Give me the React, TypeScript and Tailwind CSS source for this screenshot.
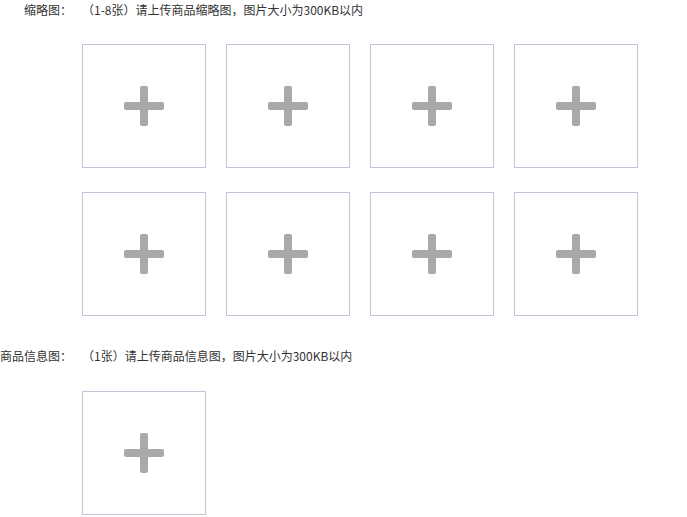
import React from "react";

function Plus() {
  return (
    <svg width="40" height="40" viewBox="0 0 40 40">
      <rect x="0" y="16" width="40" height="8" rx="2" fill="#a9a9a9" />
      <rect x="16" y="0" width="8" height="40" rx="2" fill="#a9a9a9" />
    </svg>
  );
}

function Box() {
  return (
    <div className="w-[124px] h-[124px] border border-[#c6c3d6] bg-white flex items-center justify-center">
      <Plus />
    </div>
  );
}

export default function App() {
  return (
    <div
      className="w-[687px] h-[517px] bg-white text-[#333] text-[12px] leading-[20px] overflow-hidden [text-spacing-trim:space-all]"
      style={{ fontFamily: '"Noto Sans CJK SC", "Noto Sans", sans-serif' }}
    >
      <div className="flex">
        <div className="w-[72px] text-right shrink-0 whitespace-nowrap">缩略图：</div>
        <div className="ml-[10px]">
          <div>（1-8张）请上传商品缩略图，图片大小为300KB以内</div>
          <div className="mt-[24px] grid grid-cols-[repeat(4,124px)] gap-x-[20px] gap-y-[24px]">
            {Array.from({ length: 8 }).map((_, i) => (
              <Box key={i} />
            ))}
          </div>
        </div>
      </div>
      <div className="flex mt-[30px]">
        <div className="w-[72px] text-right shrink-0 whitespace-nowrap">商品信息图：</div>
        <div className="ml-[10px]">
          <div>（1张）请上传商品信息图，图片大小为300KB以内</div>
          <div className="mt-[25px]">
            <Box />
          </div>
        </div>
      </div>
    </div>
  );
}
